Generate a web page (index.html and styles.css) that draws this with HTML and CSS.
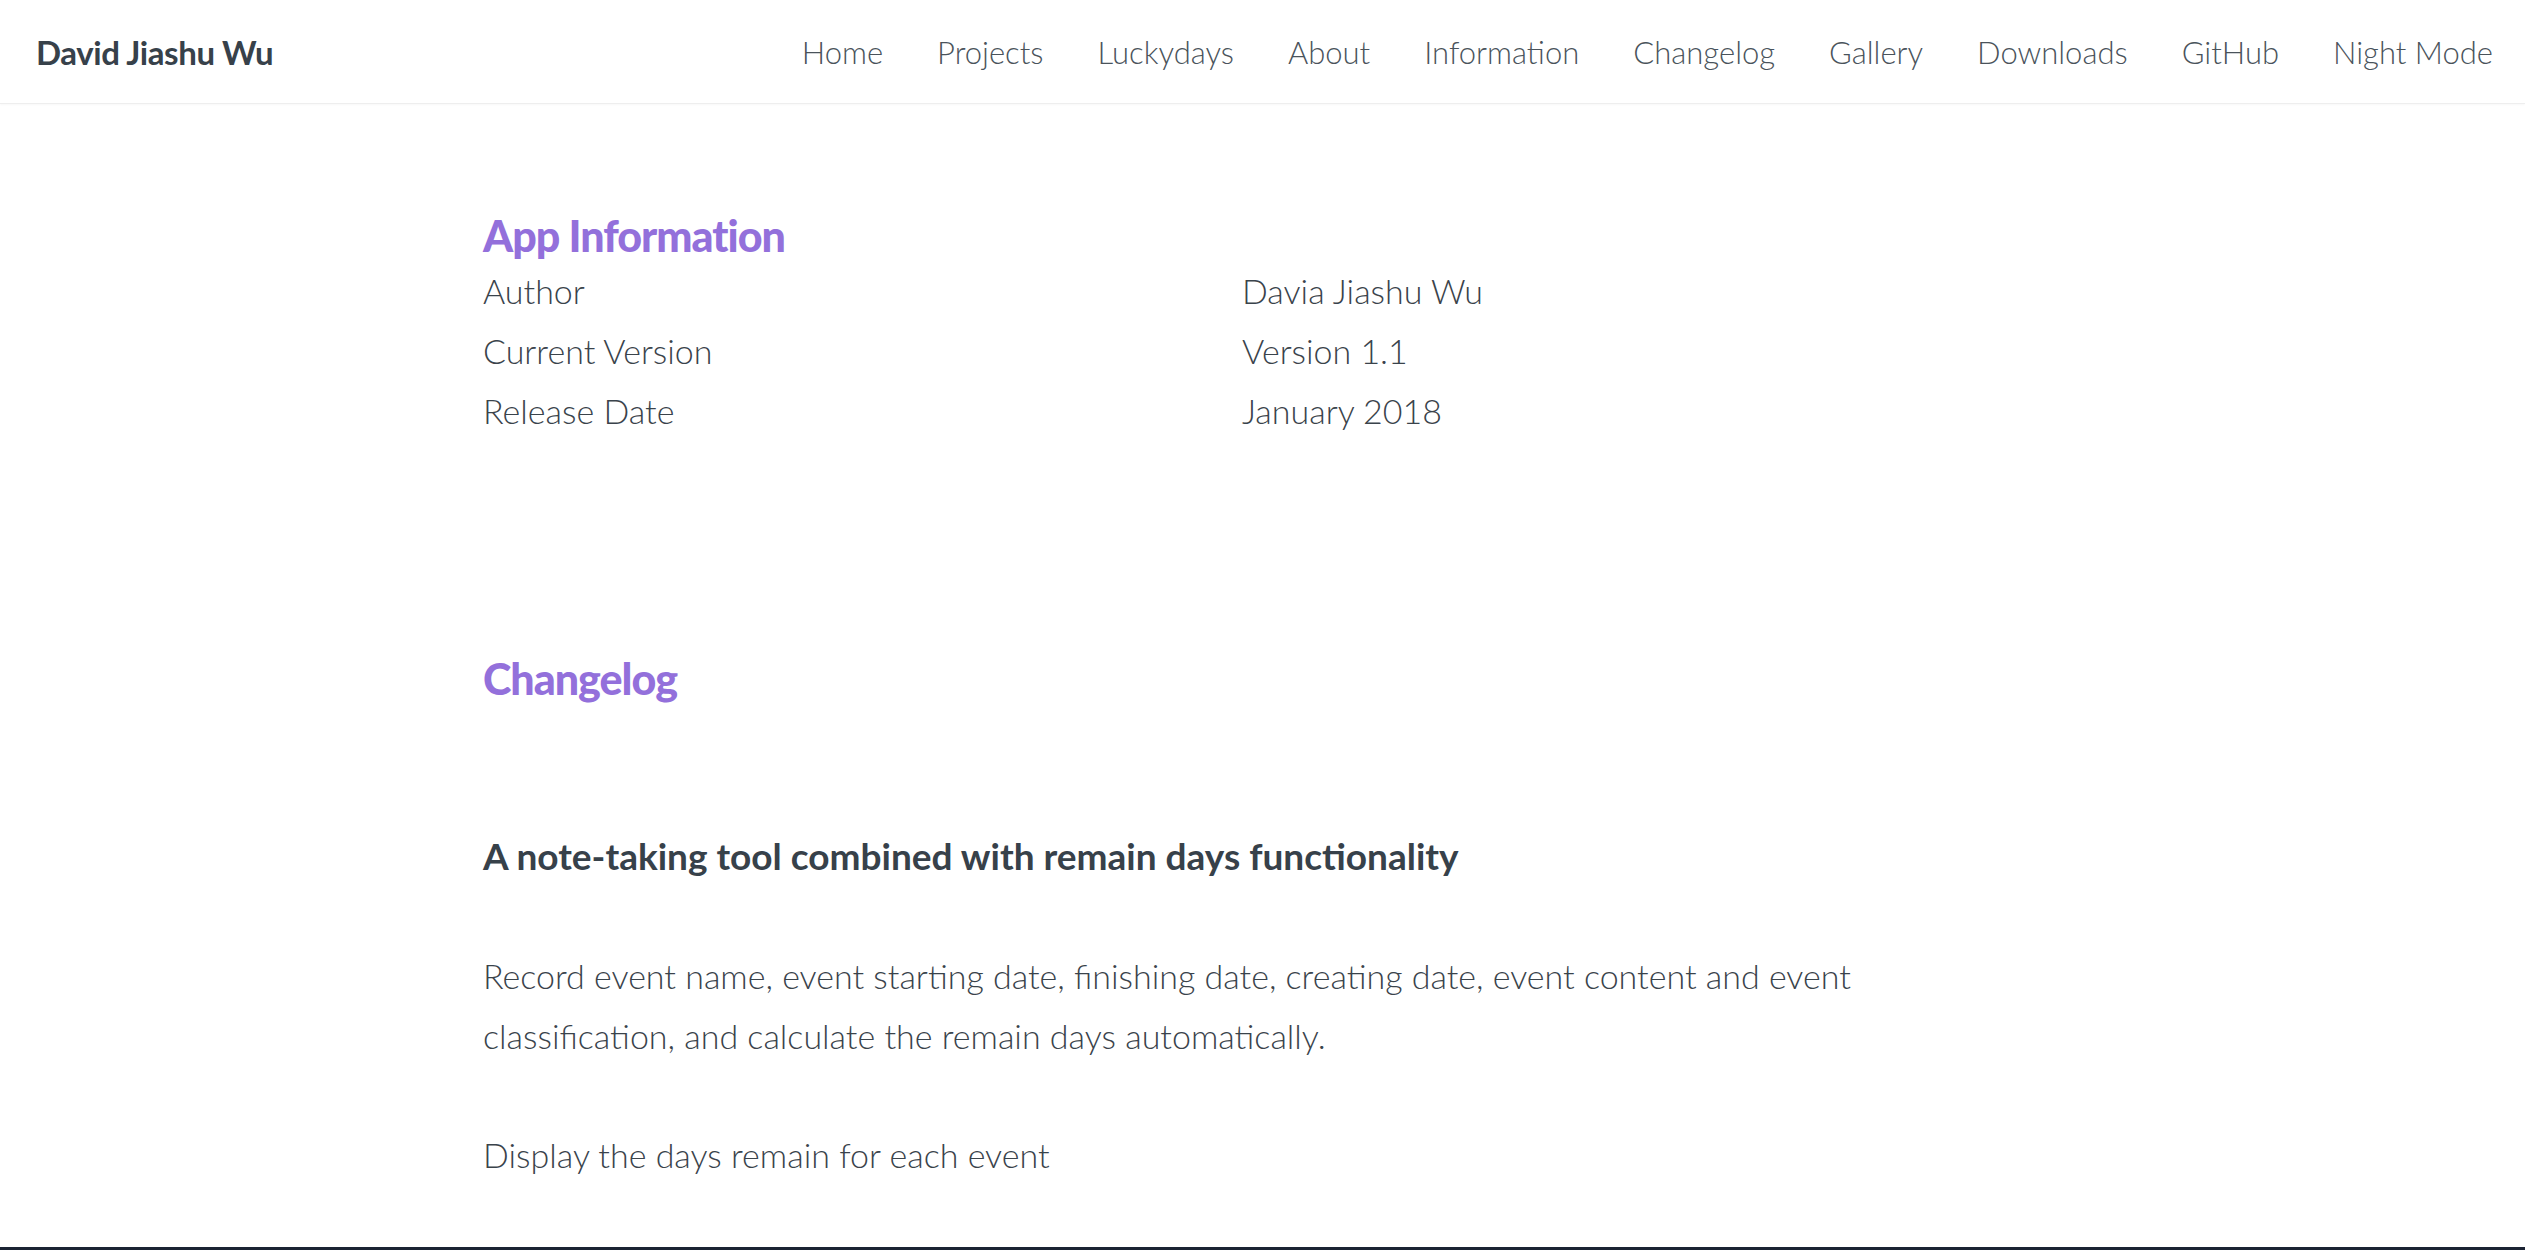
FILE: index.html
```html
<!DOCTYPE html>
<html lang="en">
<head>
<meta charset="utf-8">
<title>Luckydays - App Information</title>
<link rel="stylesheet" href="styles.css">
</head>
<body>
<header class="topbar">
  <a class="brand" href="#">David Jiashu Wu</a>
  <nav class="nav">
    <a href="#">Home</a>
    <a href="#">Projects</a>
    <a href="#">Luckydays</a>
    <a href="#">About</a>
    <a href="#">Information</a>
    <a href="#">Changelog</a>
    <a href="#">Gallery</a>
    <a href="#">Downloads</a>
    <a href="#">GitHub</a>
    <a href="#">Night Mode</a>
  </nav>
</header>
<main class="container">
  <section class="info">
    <h2 class="section-title">App Information</h2>
    <dl class="info-grid">
      <dt>Author</dt><dd>Davia Jiashu Wu</dd>
      <dt>Current Version</dt><dd>Version 1.1</dd>
      <dt>Release Date</dt><dd>January 2018</dd>
    </dl>
  </section>
  <section class="changelog">
    <h2 class="section-title">Changelog</h2>
    <h3 class="entry-title">A note-taking tool combined with remain days functionality</h3>
    <p class="entry-text">Record event name, event starting date, finishing date, creating date, event content and event classification, and calculate the remain days automatically.</p>
    <p class="entry-text">Display the days remain for each event</p>
  </section>
</main>
<footer class="footer"></footer>
</body>
</html>
```
FILE: styles.css
```css
* { box-sizing: border-box; }
html, body { margin: 0; padding: 0; background: #ffffff; }
body {
  font-family: Lato, "Open Sans", sans-serif;
  color: #3a434b;
  font-weight: 300;
}
a { text-decoration: none; color: inherit; }

.topbar {
  height: 104px;
  display: flex;
  align-items: center;
  justify-content: space-between;
  padding: 0 32px 0 36px;
  border-bottom: 1px solid #eeeeee;
  box-shadow: 0 1px 2px rgba(0,0,0,0.03);
}
.brand {
  font-weight: 700;
  font-size: 33px;
  color: #37414a;
  letter-spacing: -0.4px;
}
.nav { display: flex; gap: 54px; }
.nav a {
  font-size: 31px;
  font-weight: 300;
  color: #4a535b;
}

.container {
  max-width: 1559px;
  margin: 0 auto;
}
.section-title {
  margin: 0;
  font-size: 43px;
  line-height: 50px;
  font-weight: 900;
  color: #9370db;
  letter-spacing: -1px;
}
.info { padding-top: 107px; }
.info-grid {
  margin: 0;
  display: grid;
  grid-template-columns: 759px 1fr;
  font-size: 34px;
  line-height: 60px;
}
.info-grid dt, .info-grid dd { margin: 0; }

.changelog { padding-top: 213px; }
.entry-title {
  margin: 130px 0 0;
  font-size: 37px;
  line-height: 44px;
  font-weight: 700;
  color: #37414a;
}
.entry-text {
  margin: 68px 0 0;
  font-size: 34px;
  line-height: 60px;
}
.entry-text + .entry-text { margin-top: 59px; }

.footer {
  margin-top: 62px;
  height: 40px;
  background: #1b2333;
}
```
